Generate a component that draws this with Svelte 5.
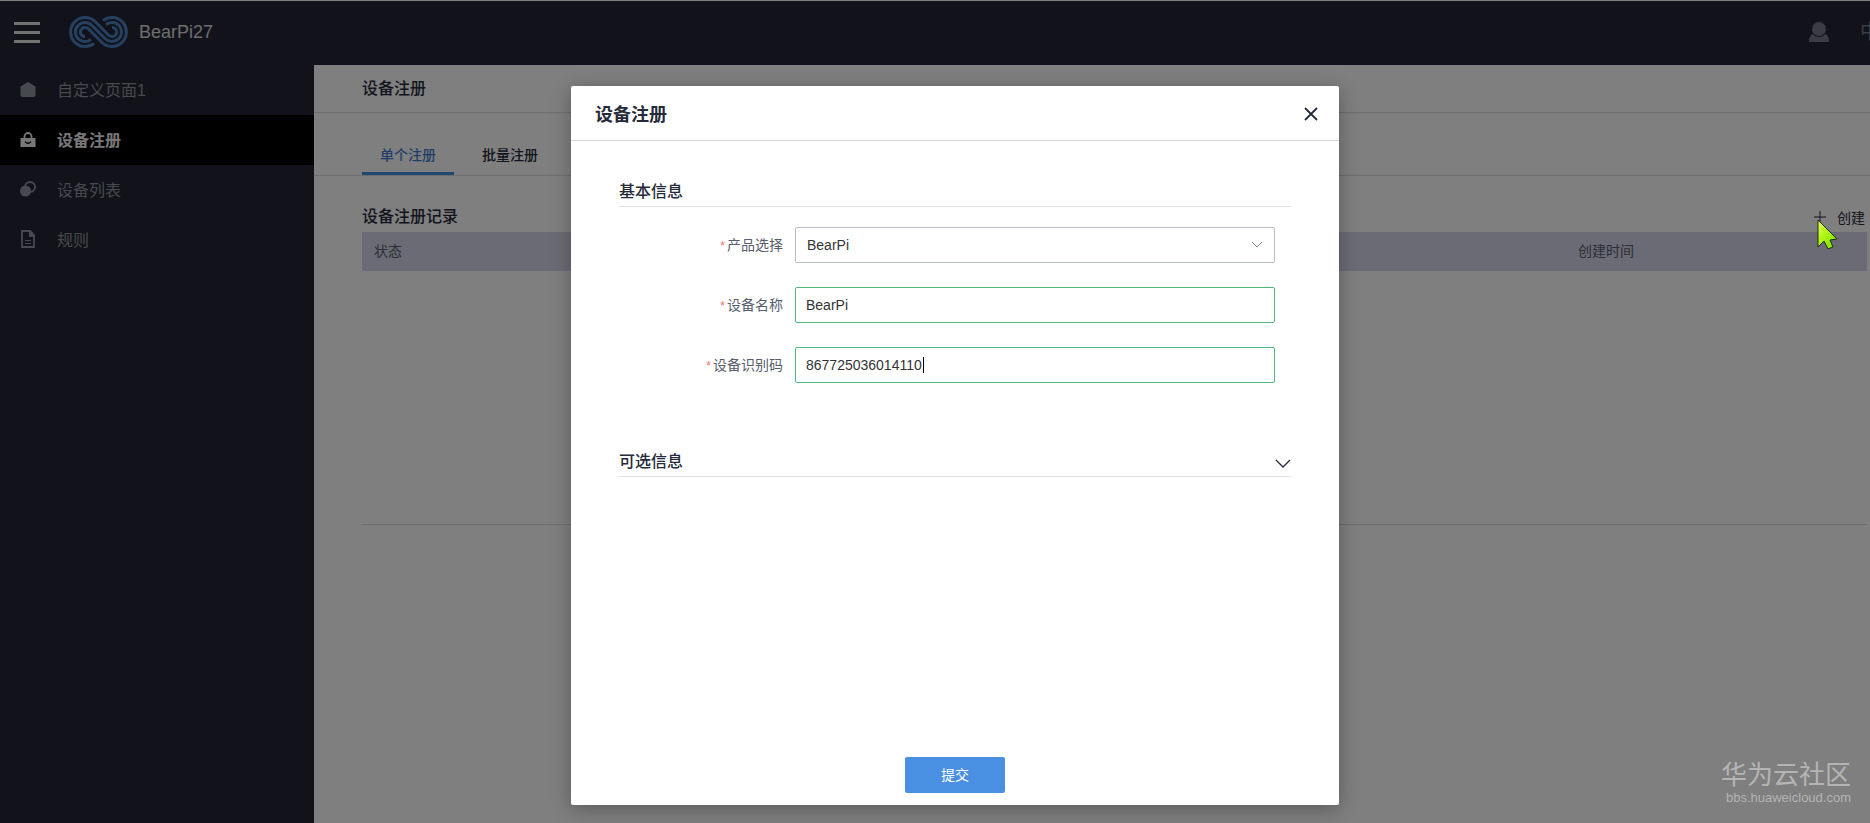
<script lang="ts">
  type MenuItem = { label: string; icon: string; active?: boolean };

  const menu: MenuItem[] = [
    { label: "自定义页面1", icon: "home" },
    { label: "设备注册", icon: "lock", active: true },
    { label: "设备列表", icon: "circles" },
    { label: "规则", icon: "doc" }
  ];

  let tab = $state("单个注册");
  let open = $state(true);
  let product = $state("BearPi");
  let deviceName = $state("BearPi");
  let deviceCode = $state("867725036014110");
</script>

<div class="page">
  <header class="topbar">
    <button class="burger" type="button" aria-label="菜单">
      <span></span><span></span><span></span>
    </button>
    <svg class="logo" width="60" height="32" viewBox="0 0 60 32" fill="none" stroke-width="3">
      <path d="M25 27.5A14.5 14.5 0 1 1 26.3 5.7L39.8 19.3A4.6 4.6 0 1 0 43 11.4" />
      <path d="M22 23.3A9.5 9.5 0 1 1 22.7 9.3L36.3 22.7A9.5 9.5 0 1 0 37 8.7" />
      <path d="M16 20.6A4.6 4.6 0 1 1 19.2 12.7L32.7 26.3A14.5 14.5 0 1 0 34 4.5" />
    </svg>
    <span class="brand">BearPi27</span>
    <div class="top-right">
      <svg width="20" height="20" viewBox="0 0 20 20" fill="currentColor">
        <circle cx="10" cy="7" r="7" />
        <path d="M4 12c2 4 10 4 12 0c3 1 4 4 4 8H0c0-4 1-7 4-8Z" />
      </svg>
      <a class="lang" href="#lang">中</a>
    </div>
  </header>

  <div class="columns">
    <nav class="sidebar">
      {#each menu as item (item.label)}
        <a href="#menu" class="menu-item" class:active={item.active}>
          <svg width="16" height="18" viewBox="0 0 16 18" fill="currentColor">
            {#if item.icon === "home"}
              <path d="M8 2 15.5 6.5V15q0 2-2 2h-11q-2 0-2-2V6.5Z" />
            {:else if item.icon === "lock"}
              <path d="M4.5 8V6.500a3.500 3.500 0 0 1 7 0V8" fill="none" stroke="currentColor" stroke-width="1.800" />
              <path fill-rule="evenodd" d="M.5 8h15v9H.5ZM4.500 12q3.500 4 7 0l-1-.7q-2.500 2.500-5 0Z" />
            {:else if item.icon === "circles"}
              <circle cx="10" cy="7" r="5" fill="none" stroke="currentColor" stroke-width="1.800" />
              <circle cx="5.500" cy="11" r="5.500" />
            {:else}
              <path d="M2 1h8l4 4v12H2Z" fill="none" stroke="currentColor" stroke-width="1.800" />
              <path d="M9 1h1l5 5v1H9ZM5 10h6v1H5ZM5 13h6v1H5Z" />
            {/if}
          </svg>
          <span>{item.label}</span>
        </a>
      {/each}
    </nav>

    <main class="content">
      <h1>设备注册</h1>
      <div class="tabs">
        {#each ["单个注册", "批量注册"] as name (name)}
          <button type="button" class:current={tab === name} onclick={() => (tab = name)}>{name}</button>
        {/each}
      </div>

      <section class="records">
        <div class="records-head">
          <h2>设备注册记录</h2>
          <button class="create" type="button" onclick={() => (open = true)}>
            <svg width="14" height="14" viewBox="0 0 14 14" fill="none" stroke="currentColor">
              <path d="M7 1v12M1 7h12" />
            </svg>
            创建
          </button>
        </div>
        <table>
          <thead>
            <tr><th class="status">状态</th><th>创建时间</th></tr>
          </thead>
          <tbody>
            <tr><td colspan="2"></td></tr>
          </tbody>
        </table>
      </section>
    </main>
  </div>
</div>

{#if open}
  <div class="overlay">
    <div class="dialog" role="dialog" aria-modal="true" aria-labelledby="dialog-title">
      <div class="dialog-head">
        <h2 id="dialog-title">设备注册</h2>
        <button class="close" type="button" aria-label="关闭" onclick={() => (open = false)}>
          <svg width="14" height="14" viewBox="0 0 14 14" fill="none" stroke="currentColor" stroke-width="1.800">
            <path d="M1 1l12 12M13 1 1 13" />
          </svg>
        </button>
      </div>

      <form class="dialog-body" onsubmit={(e) => e.preventDefault()}>
        <h3>基本信息</h3>
        <div class="fields">
          <label for="product"><i>*</i>产品选择</label>
          <div class="select">
            <select id="product" bind:value={product}>
              <option>BearPi</option>
            </select>
            <svg width="12" height="8" viewBox="0 0 12 8" fill="none" stroke="currentColor">
              <path d="M1 1l5 5 5-5" />
            </svg>
          </div>
          <label for="name"><i>*</i>设备名称</label>
          <input id="name" type="text" bind:value={deviceName} />
          <label for="code"><i>*</i>设备识别码</label>
          <div class="entry">
            <input id="code" type="text" bind:value={deviceCode} />
            <span class="caret" aria-hidden="true"></span>
          </div>
        </div>

        <h3 class="optional">
          可选信息
          <button type="button" aria-label="展开">
            <svg width="16" height="10" viewBox="0 0 16 10" fill="none" stroke="currentColor" stroke-width="1.300">
              <path d="M1 1l7 7 7-7" />
            </svg>
          </button>
        </h3>

        <button class="submit" type="submit">提交</button>
      </form>
    </div>
  </div>
{/if}

<svg class="pointer" width="22" height="32" viewBox="0 0 22 32">
  <defs>
    <linearGradient id="lime" x1="0" y1="0" x2="1" y2="1">
      <stop offset="0" stop-color="#e6ff5c" />
      <stop offset="0.5" stop-color="#a8f40c" />
      <stop offset="1" stop-color="#6fdc00" />
    </linearGradient>
  </defs>
  <path d="M1 1v27l6-6 4 8 5-2-3-7 7-1Z" fill="url(#lime)" stroke="#20300a" />
</svg>

<div class="watermark">
  <strong>华为云社区</strong>
  <span>bbs.huaweicloud.com</span>
</div>

<style>
  :global(body) {
    overflow: hidden;
    font-family: "Liberation Sans", "Noto Sans CJK SC", sans-serif;
    font-size: 14px;
    color: #252b3a;
  }

  button {
    padding: 0;
    border: 0;
    background: transparent;
    color: inherit;
    font: inherit;
    cursor: pointer;
  }

  a {
    color: inherit;
    text-decoration: none;
  }

  h1,
  h2,
  h3 {
    margin: 0;
    font-size: 16px;
    font-weight: 500;
  }

  svg {
    flex: none;
  }

  .page {
    display: flex;
    flex-direction: column;
    width: calc(100% + 40px);
    min-height: 100vh;
  }

  .topbar {
    display: flex;
    align-items: center;
    box-sizing: border-box;
    height: 65px;
    padding: 0 0 2px 14px;
    border-top: 1px solid #fff;
    background: #242734;
  }

  .burger {
    display: flex;
    flex-direction: column;
    gap: 6px;
    width: 26px;
  }

  .burger span {
    height: 3px;
    background: #e4e4e4;
  }

  .logo {
    margin: 0 10px 0 29px;
    stroke: #4a80c0;
  }

  .brand {
    color: #dcdcdc;
    font-size: 18px;
  }

  .top-right {
    display: flex;
    align-items: center;
    gap: 31px;
    margin-left: auto;
    padding-right: 30px;
    color: #767988;
  }

  .lang {
    font-size: 20px;
    line-height: 24px;
  }

  .columns {
    display: flex;
    flex: 1;
  }

  .sidebar {
    width: 314px;
    background: #242734;
  }

  .menu-item {
    display: flex;
    align-items: center;
    gap: 21px;
    box-sizing: border-box;
    height: 50px;
    padding: 0 0 2px 20px;
    color: #8c929c;
    font-size: 16px;
  }

  .menu-item.active {
    background: #000;
    color: #f0f0f0;
    font-weight: 700;
  }

  .content {
    flex: 1;
    background: #fff;
  }

  h1 {
    padding: 1px 48px 0;
    border-bottom: 1px solid #dcdcdc;
    line-height: 46px;
  }

  .tabs {
    display: flex;
    align-items: flex-end;
    gap: 10px;
    height: 62px;
    padding: 0 48px;
    border-bottom: 1px solid #dcdcdc;
  }

  .tabs button {
    padding: 0 18px;
    border-bottom: 3px solid transparent;
    line-height: 34px;
    font-weight: 500;
  }

  .tabs .current {
    border-color: #3f8fe0;
    color: #3f7fd0;
  }

  .records {
    padding: 24px 43px 0 48px;
  }

  .records-head {
    display: flex;
    align-items: center;
    justify-content: space-between;
    box-sizing: border-box;
    height: 32px;
    padding-bottom: 2px;
  }

  .create {
    display: flex;
    align-items: center;
    gap: 10px;
    padding: 4px 2px 0 0;
  }

  table {
    width: 100%;
    border-collapse: collapse;
  }

  th {
    box-sizing: border-box;
    height: 39px;
    padding: 0 12px 4px;
    background: #d5d7e8;
    color: #575d6c;
    font-weight: 400;
    text-align: left;
  }

  .status {
    width: 80%;
  }

  td {
    box-sizing: border-box;
    height: 253px;
    padding: 0;
    border-bottom: 1px solid #dcdcdc;
  }

  .overlay {
    position: absolute;
    inset: 0 -40px 0 0;
    display: flex;
    justify-content: center;
    padding: 86px 0 18px;
    background: rgba(0, 0, 0, 0.5);
  }

  .dialog {
    display: flex;
    flex-direction: column;
    width: 768px;
    border-radius: 2px;
    background: #fff;
    box-shadow: 0 4px 20px rgba(0, 0, 0, 0.3);
  }

  .dialog-head {
    display: flex;
    align-items: center;
    justify-content: space-between;
    height: 54px;
    padding: 0 21px 0 24px;
    border-bottom: 1px solid #d4d6da;
  }

  .dialog-head h2 {
    font-size: 18px;
    font-weight: 700;
  }

  .close {
    display: flex;
    padding-top: 2px;
  }

  .dialog-body {
    display: flex;
    flex: 1;
    flex-direction: column;
    padding: 36px 48px 12px;
  }

  h3 {
    border-bottom: 1px solid #dfe1e6;
    line-height: 29px;
  }

  .fields {
    display: grid;
    grid-template-columns: 164px 480px;
    gap: 24px 12px;
    align-items: center;
    margin: 20px 0 64px;
  }

  label {
    padding-bottom: 2px;
    color: #575d6c;
    text-align: right;
  }

  label i {
    margin-right: 2px;
    color: #f66f6a;
    font-size: 12px;
    font-style: normal;
  }

  input,
  select {
    display: block;
    box-sizing: border-box;
    width: 100%;
    height: 36px;
    padding: 0 10px;
    border: 1px solid #50b87c;
    border-radius: 2px;
    outline: 0;
    background: #fff;
    color: #333;
    font: inherit;
  }

  select {
    appearance: none;
    padding: 0 11px;
    border-color: #b8bccb;
  }

  .select,
  .entry {
    position: relative;
  }

  .select svg {
    position: absolute;
    top: 14px;
    right: 12px;
    color: #80859a;
    pointer-events: none;
  }

  .caret {
    position: absolute;
    top: 10px;
    left: 128px;
    width: 1px;
    height: 16px;
    background: #000;
  }

  .optional {
    display: flex;
    align-items: center;
    justify-content: space-between;
  }

  .optional button {
    display: flex;
    padding-top: 4px;
  }

  .submit {
    align-self: center;
    width: 100px;
    height: 36px;
    margin-top: auto;
    padding-bottom: 2px;
    border-radius: 2px;
    background: #4a90e2;
    color: #fff;
  }

  .pointer {
    position: absolute;
    top: 219px;
    right: 31px;
  }

  .watermark {
    position: absolute;
    right: 19px;
    bottom: 17px;
    display: flex;
    flex-direction: column;
    align-items: flex-end;
    color: #b4b4b4;
    font-size: 13px;
    line-height: 16px;
  }

  .watermark strong {
    font-size: 26px;
    font-weight: 400;
    line-height: 30px;
  }
</style>
